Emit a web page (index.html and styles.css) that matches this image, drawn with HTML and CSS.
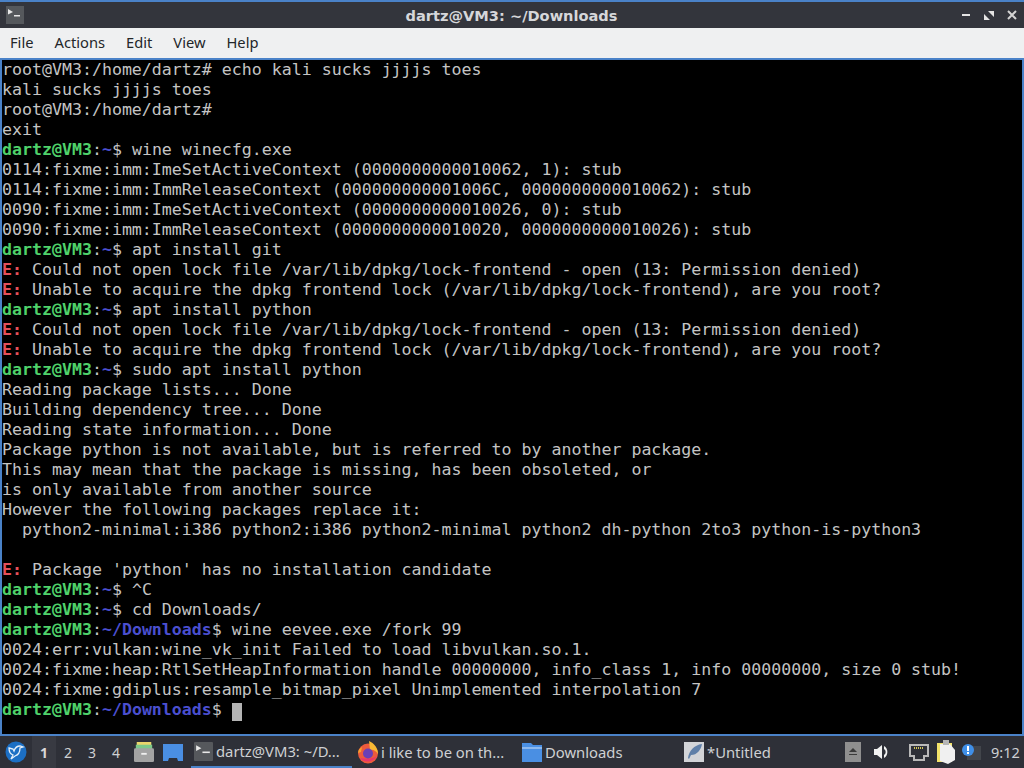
FILE: index.html
```html
<!DOCTYPE html>
<html lang="en">
<head>
<meta charset="utf-8">
<title>dartz@VM3: ~/Downloads</title>
<link rel="stylesheet" href="styles.css">
</head>
<body>
<div class="window">
  <header class="titlebar">
    <svg class="app-icon" width="18" height="18" viewBox="0 0 18 18"><rect width="18" height="18" fill="#55585c"/><path d="M2 3l5 3-5 2.500z" fill="#e8e8e8"/><rect x="8" y="9" width="6" height="1.500" fill="#e8e8e8"/></svg>
    <div class="title">dartz@VM3: ~/Downloads</div>
    <div class="controls">
      <svg width="10" height="10" viewBox="0 0 10 10"><rect x="1" y="4" width="8" height="2" fill="#e4e4e4"/></svg>
      <svg width="10" height="10" viewBox="0 0 10 10"><path d="M4 1h6v6zM0 4l6 6H0z" fill="#e4e4e4"/></svg>
      <svg width="10" height="10" viewBox="0 0 10 10"><path d="M1 1l8 8M9 1l-8 8" stroke="#d4d4d4" stroke-width="2"/></svg>
    </div>
  </header>
  <nav class="menubar"><span>File</span><span>Actions</span><span>Edit</span><span>View</span><span>Help</span></nav>
  <main class="terminal"><pre class="output">root@VM3:/home/dartz# echo kali sucks jjjjs toes
kali sucks jjjjs toes
root@VM3:/home/dartz# 
exit
<b class="g">dartz@VM3</b>:<b class="b">~</b>$ wine winecfg.exe
0114:fixme:imm:ImeSetActiveContext (0000000000010062, 1): stub
0114:fixme:imm:ImmReleaseContext (000000000001006C, 0000000000010062): stub
0090:fixme:imm:ImeSetActiveContext (0000000000010026, 0): stub
0090:fixme:imm:ImmReleaseContext (0000000000010020, 0000000000010026): stub
<b class="g">dartz@VM3</b>:<b class="b">~</b>$ apt install git
<b class="r">E:</b> Could not open lock file /var/lib/dpkg/lock-frontend - open (13: Permission denied)
<b class="r">E:</b> Unable to acquire the dpkg frontend lock (/var/lib/dpkg/lock-frontend), are you root?
<b class="g">dartz@VM3</b>:<b class="b">~</b>$ apt install python
<b class="r">E:</b> Could not open lock file /var/lib/dpkg/lock-frontend - open (13: Permission denied)
<b class="r">E:</b> Unable to acquire the dpkg frontend lock (/var/lib/dpkg/lock-frontend), are you root?
<b class="g">dartz@VM3</b>:<b class="b">~</b>$ sudo apt install python
Reading package lists... Done
Building dependency tree... Done
Reading state information... Done
Package python is not available, but is referred to by another package.
This may mean that the package is missing, has been obsoleted, or
is only available from another source
However the following packages replace it:
  python2-minimal:i386 python2:i386 python2-minimal python2 dh-python 2to3 python-is-python3

<b class="r">E:</b> Package 'python' has no installation candidate
<b class="g">dartz@VM3</b>:<b class="b">~</b>$ ^C
<b class="g">dartz@VM3</b>:<b class="b">~</b>$ cd Downloads/
<b class="g">dartz@VM3</b>:<b class="b">~/Downloads</b>$ wine eevee.exe /fork 99
0024:err:vulkan:wine_vk_init Failed to load libvulkan.so.1.
0024:fixme:heap:RtlSetHeapInformation handle 00000000, info_class 1, info 00000000, size 0 stub!
0024:fixme:gdiplus:resample_bitmap_pixel Unimplemented interpolation 7
<b class="g">dartz@VM3</b>:<b class="b">~/Downloads</b>$ <i class="cursor"> </i></pre></main>
</div>
<footer class="panel">
  <svg class="kali" width="22" height="24" viewBox="0 0 22 24"><circle cx="11" cy="12" r="10.500" fill="#1c6fc4"/><path d="M4 8l4 1 1 2c1-3 3-5 6-5l3 1-3 1c0 4-2 7-5 8l-4 3 2-4c-3-1-4-4-4-7z" fill="none" stroke="#e6f0fa" stroke-width="1.300"/></svg>
  <div class="pager"><span class="active">1</span><span>2</span><span>3</span><span>4</span></div>
  <svg class="launcher archive" width="20" height="20" viewBox="0 0 22 22"><path d="M3 0h16v5H3z" fill="#e9d66b"/><path d="M2 3h18v5H2z" fill="#7dc98a"/><rect y="7" width="22" height="15" rx="1.500" fill="#a3a3a3"/><rect x="8" y="12" width="6" height="2" fill="#f0f0f0"/></svg>
  <svg class="launcher folder" width="20" height="17" viewBox="0 0 20 17"><path d="M0 0h20v17h-5l-1-3H6l-1 3H0z" fill="#4a8fe3"/></svg>
  <div class="task current">
    <svg width="19" height="19" viewBox="0 0 18 18"><rect width="18" height="18" rx="1" fill="#55585c"/><path d="M2 3l5 3-5 2.500z" fill="#e8e8e8"/><rect x="8" y="9" width="7" height="1.500" fill="#e8e8e8"/></svg>
    <span>dartz@VM3: ~/D...</span>
  </div>
  <div class="task firefox">
    <svg width="22" height="24" viewBox="0 0 22 24"><circle cx="11" cy="13.500" r="10" fill="#ec5a3c"/><path d="M12 1c5 2 9 7 9 13-2-3-5-5-8-4z" fill="#f8b934"/><path d="M1 13c0-3 2-5 4-6l-1 5z" fill="#f8a02c"/><path d="M3 18c3 5 13 5 17-2-4 3-10 3-17 2z" fill="#e8356a"/><circle cx="11" cy="13.500" r="5" fill="#6a3fb5"/></svg>
    <span>i like to be on th...</span>
  </div>
  <div class="task files">
    <svg width="20" height="20" viewBox="0 0 20 20"><path d="M0 1h9l2 2h9v17H0z" fill="#4a8fe3"/><path d="M0 6h20" stroke="#cfe2fa"/></svg>
    <span>Downloads</span>
  </div>
  <div class="task editor">
    <svg width="20" height="20" viewBox="0 0 20 20"><rect width="20" height="20" fill="#d2d4d8"/><path d="M4 16C5 9 10 3 18 2c-1 6-5 11-11 11l-2 4z" fill="#5f7fa8"/></svg>
    <span>*Untitled</span>
  </div>
  <div class="tray">
    <svg class="eject" width="16" height="20" viewBox="0 0 16 20"><rect width="16" height="20" fill="#8f8f8f"/><path d="M8 6l4 4H4z" fill="#3a3a3a"/><rect x="4" y="12" width="8" height="1" fill="#3a3a3a"/></svg>
    <svg class="volume" width="16" height="16" viewBox="0 0 16 16"><path d="M0 5h3l5-4v14l-5-4H0z" fill="#f2f2f2"/><path d="M10 2a7 7 0 0 1 0 12V2z" fill="#f2f2f2"/><path d="M10 5a3.500 3.500 0 0 1 0 6z" fill="#2e3038"/></svg>
    <svg class="network" width="20" height="17" viewBox="0 0 20 17"><path d="M1 1h18v11h-4v4H5v-4H1z" fill="none" stroke="#b9b9b9" stroke-width="2"/><path d="M5 4h10" stroke="#d6c95a" stroke-width="2" stroke-dasharray="1 1"/></svg>
    <svg class="notes" width="20" height="25" viewBox="0 0 20 25"><path d="M1 3h15v19H1z" fill="#f3e36a"/><path d="M4 4h10l5 6v10l-7 4-8-3z" fill="#f0f0f0"/><rect x="7" y="0" width="6" height="5" fill="#b5b5b5"/></svg>
    <svg class="alert" width="20" height="18" viewBox="0 0 20 18"><rect x="6" y="3" width="14" height="14" fill="#42454b"/><circle cx="7" cy="7" r="6" fill="#3f8fe8"/><rect x="6" y="3" width="2" height="5" fill="#fff"/><rect x="6" y="9" width="2" height="2" fill="#fff"/></svg>
    <div class="clock">9:12</div>
  </div>
</footer>
</body>
</html>
```
FILE: styles.css
```css
* { box-sizing: border-box; }
html, body { margin: 0; height: 100%; }
body {
  width: 1024px;
  height: 768px;
  overflow: hidden;
  background: #2e3038;
  display: flex;
  flex-direction: column;
  font-family: "Noto Sans", sans-serif;
}
.window {
  height: 736px;
  display: flex;
  flex-direction: column;
  border: 2px solid #4a82c8;
  background: #000;
}
.titlebar {
  height: 26px;
  margin: 0 -2px;
  padding: 0 6px;
  flex: none;
  background: #33353c;
  display: flex;
  align-items: center;
}
.app-icon { flex: none; }
.title {
  flex: 1;
  text-align: center;
  color: #d6d7da;
  font-family: "DejaVu Sans", sans-serif;
  font-size: 14.600px;
  font-weight: 700;
  padding-left: 38px;
}
.controls { display: flex; gap: 13px; padding-right: 1px; }
.menubar {
  height: 32px;
  margin: 0 -2px;
  padding: 0 0 2px 10px;
  flex: none;
  background: #eff0f1;
  color: #232629;
  font-size: 14.700px;
  display: flex;
  align-items: center;
  gap: 21px;
  border-bottom: 2px solid #4a82c8;
}
.terminal {
  flex: 1;
  overflow: hidden;
  background: #000;
}
.output {
  margin: 0;
  font-family: "DejaVu Sans Mono", monospace;
  font-size: 16.600px;
  line-height: 20px;
  color: #c4c4c4;
}
.output b { font-weight: 700; }
.g { color: #4fd26a; }
.b { color: #4a4fd0; }
.r { color: #e6505a; }
.cursor {
  display: inline-block;
  width: 10px;
  height: 18px;
  background: #b4b4b4;
  vertical-align: -3px;
}
.panel {
  height: 32px;
  flex: none;
  display: flex;
  align-items: center;
  color: #cfd0d3;
  font-size: 14.800px;
  background: #2e3038;
}
.kali { margin-left: 5px; flex: none; }
.pager {
  display: flex;
  width: 96px;
  margin-left: 5px;
  height: 100%;
  font-size: 14px;
  flex: none;
}
.pager span {
  width: 24px;
  display: flex;
  align-items: center;
  justify-content: center;
}
.pager .active {
  background: #383a42;
  font-weight: 700;
  color: #d8d8d8;
}
.launcher { flex: none; }
.archive { margin-left: 6px; }
.folder { margin-left: 9px; }
.task {
  height: 100%;
  display: flex;
  align-items: center;
  gap: 3px;
  flex: none;
  white-space: nowrap;
}
.task.current {
  width: 161px;
  border-bottom: 2px solid #4a82c8;
  margin-left: 8px;
  padding-left: 3px;
}
.task.firefox { width: 170px; padding-left: 5px; gap: 2px; }
.task.files { width: 162px; gap: 3px; }
.task.editor { width: 161px; gap: 3px; }
.tray {
  flex: 1;
  height: 100%;
  display: flex;
  align-items: center;
}
.eject { margin-left: 0; }
.volume { margin-left: 13px; }
.network { margin-left: 19px; }
.notes { margin-left: 7px; }
.alert { margin-left: 5px; }
.clock { margin-left: 10px; font-size: 14.500px; }
```
